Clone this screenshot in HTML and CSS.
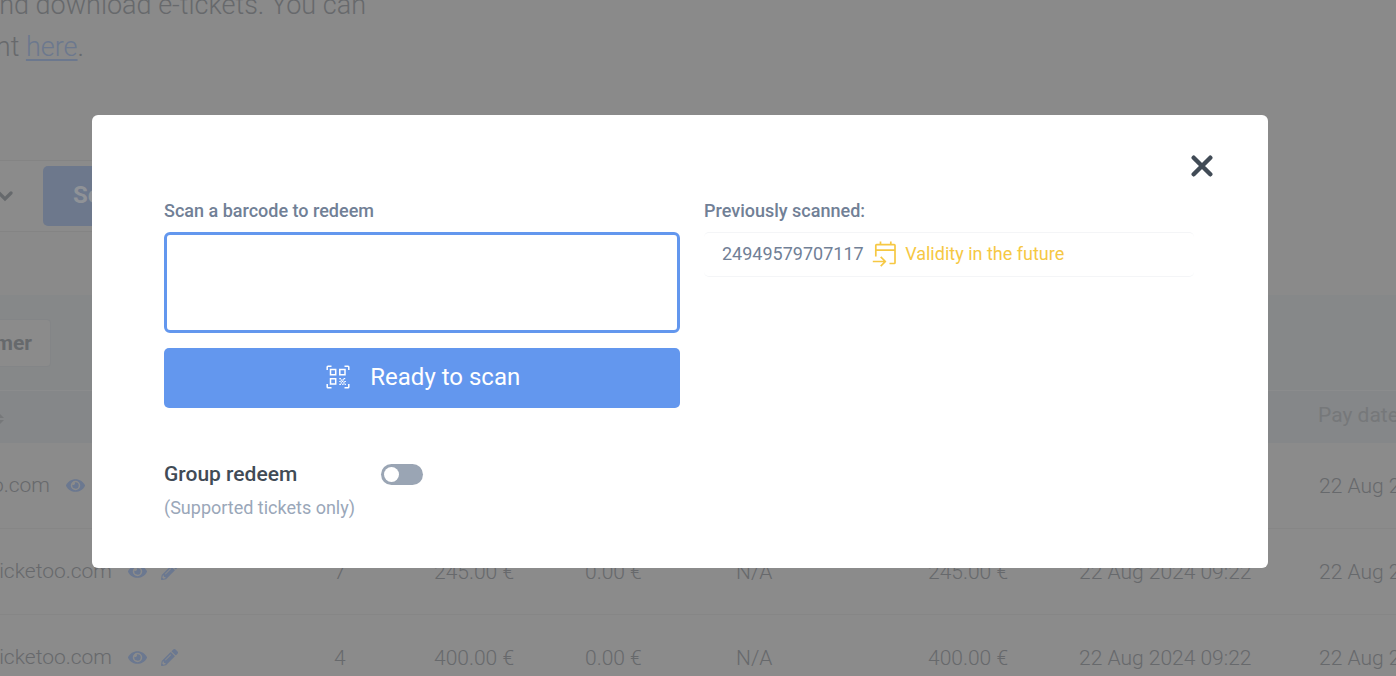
FILE: index.html
```
<!DOCTYPE html>
<html lang="en">
<head>
<meta charset="utf-8">
<title>Redeem tickets</title>
<link rel="stylesheet" href="styles.css">
</head>
<body>
<svg class="sprite" width="0" height="0" aria-hidden="true">
  <symbol id="eye" viewBox="0 0 576 512"><path fill="currentColor" d="M572.5 241.4C518.3 135.6 410.9 64 288 64S57.7 135.6 3.500 241.400a32.400 32.400 0 0 0 0 29.200C57.700 376.400 165.100 448 288 448s230.300-71.600 284.500-177.400a32.400 32.400 0 0 0 0-29.200zM288 400a144 144 0 1 1 144-144 143.900 143.900 0 0 1-144 144zm0-240a95.300 95.300 0 0 0-25.300 3.800 47.900 47.900 0 0 1-66.900 66.900A95.800 95.800 0 1 0 288 160z"/></symbol>
  <symbol id="pencil" viewBox="0 0 512 512"><path fill="currentColor" d="M498 142l-46 46c-5 5-13 5-17 0L324 77c-5-5-5-12 0-17l46-46c19-19 49-19 68 0l60 60c19 19 19 49 0 68zm-214-42L22 362 0 484c-3 16 12 30 28 28l122-22 262-262c5-5 5-13 0-17L301 100c-4-5-12-5-17 0zM124 340c-5-6-5-14 0-20l154-154c6-5 14-5 20 0s5 14 0 20L144 340c-6 5-14 5-20 0zm-36 84h48v36l-64 12-32-31 12-65h36v48z"/></symbol>
</svg>
<main class="page">
  <section class="intro">
    <p class="intro-line first">nd download e-tickets. You can</p>
    <p class="intro-line second">nt <a class="link">here</a>.</p>
  </section>
  <section class="filters">
    <svg class="chevron" width="18" height="14" viewBox="0 0 18 14"><path d="M3 4l6 6 6-6" fill="none" stroke="currentColor" stroke-width="3.200" stroke-linecap="round"/></svg>
    <span class="search">Search</span>
  </section>
  <section class="tabs"><span class="tab">mer</span></section>
  <section class="table">
    <div class="row head"><div class="sort"><svg width="16" height="16" viewBox="0 0 16 16"><path d="M1 7l7-7 7 7zM1 9h14l-7 7z" fill="currentColor"/></svg></div><span class="paid">Pay date</span></div>
    <div class="row">
      <div class="email short"><span class="mail">o.com</span><svg class="eye"><use href="#eye"/></svg></div>
      <span></span><span></span><span></span><span></span><span></span><span></span><span>22 Aug 2024</span>
    </div>
    <div class="row">
      <div class="email"><span class="mail">icketoo.com</span><svg class="eye"><use href="#eye"/></svg><svg class="pencil"><use href="#pencil"/></svg></div>
      <span>7</span><span>245.00 €</span><span>0.00 €</span><span>N/A</span><span>245.00 €</span><span>22 Aug 2024 09:22</span><span>22 Aug 2024</span>
    </div>
    <div class="row">
      <div class="email"><span class="mail">icketoo.com</span><svg class="eye"><use href="#eye"/></svg><svg class="pencil"><use href="#pencil"/></svg></div>
      <span>4</span><span>400.00 €</span><span>0.00 €</span><span>N/A</span><span>400.00 €</span><span>22 Aug 2024 09:22</span><span>22 Aug 2024</span>
    </div>
  </section>
</main>
<div class="modal">
  <div class="modal-top">
    <svg class="close" width="22" height="22" viewBox="0 0 22 22"><path d="M2.700 2.700L19.300 19.300M19.300 2.700L2.700 19.300" stroke="currentColor" stroke-width="4.400" stroke-linecap="round"/></svg>
  </div>
  <div class="modal-body">
    <div class="scan">
      <label class="label">Scan a barcode to redeem</label>
      <div class="field"></div>
      <div class="ready">
        <svg width="24" height="24" viewBox="0 0 24 24" fill="none" stroke="currentColor" stroke-width="1.500"><path d="M1.200 5V2Q1.200 1.200 2 1.200H5.500M18.500 1.200H22Q22.800 1.200 22.800 2V5M22.800 19V22Q22.800 22.800 22 22.800H18.500M5.500 22.800H2Q1.200 22.800 1.200 22V19M4.500 4.500h5.200v5.200H4.500zM13.800 4.500h5.200v5.200H13.800zM4.500 13.800h5.200v5.200H4.500z"/><path stroke-width="1.200" d="M13.300 13.700h1.600M17.600 13.700h1.600M14.700 15.100h1.600M16.600 14.800h1.300M13.300 16.500h1.400M15.700 16.500h1.600M18.300 16.500h1.600M14.700 17.900h1.400M17.200 17.900h1.500M13.300 19.300h1.600M16.200 19.300h1.300M18.600 19.300h1.300"/></svg>
        <span class="ready-text">Ready to scan</span>
      </div>
      <div class="group"><span class="group-name">Group redeem</span><span class="toggle"><span class="knob"></span></span></div>
      <p class="note">(Supported tickets only)</p>
    </div>
    <div class="history">
      <p class="label">Previously scanned:</p>
      <div class="entry">
        <span class="code">24949579707117</span>
        <svg class="calendar" width="26" height="26" viewBox="0 0 26 26" fill="none" stroke="currentColor" stroke-width="1.700"><path stroke-linejoin="round" d="M3.800 15.500V4.500Q3.800 3.700 4.600 3.700H22.200Q23 3.700 23 4.500V21.700Q23 22.500 22.200 22.500H17.500M3.800 9.200H23M8.500.5V4M18.800.5V4M.8 20.500H13M8.700 15.800L13.400 20.500L8.700 25.200"/></svg>
        <span class="status">Validity in the future</span>
      </div>
    </div>
  </div>
</div>
</body>
</html>
```
FILE: styles.css
```
* { box-sizing: border-box; }
body { margin: 0; overflow: hidden; background: #8a8a8a; font-family: Roboto, "Liberation Sans", sans-serif; }
p { margin: 0; }
.sprite { position: absolute; }
.page { width: 1396px; height: 676px; overflow: hidden; color: #67696c; font-weight: 300; }
.intro { height: 160px; overflow: hidden; }
.intro-line { display: flex; justify-content: flex-end; white-space: pre; font-size: 27px; line-height: 42px; height: 42px; }
.first { width: 366px; margin-top: -16px; }
.second { width: 84px; }
.link { color: #6c788e; text-decoration: underline; text-decoration-thickness: 2px; text-underline-offset: 3px; }
.filters { width: 1200px; height: 72px; display: flex; align-items: center; border-top: 1px solid #848484; border-bottom: 1px solid #848484; background: #8b8b8b; }
.chevron { margin-left: -4px; color: #66696c; }
.search { margin-left: 29px; width: 140px; height: 60px; border-radius: 5px; background: #6d788c; color: #8f9297; font-size: 24px; font-weight: 700; line-height: 58px; padding-left: 30px; }
.tabs { margin-top: 63px; height: 95px; padding-top: 24px; background: #868889; }
.tab { display: flex; justify-content: flex-end; align-items: center; width: 111px; height: 48px; margin-left: -60px; padding-right: 18px; border: 1px solid #838587; border-radius: 4px; background: #8b8b8b; font-size: 21px; font-weight: 700; color: #66696c; }
.row { display: grid; grid-template-columns: 334px 100px 151px 151px 192px 151px 240px 1fr; align-items: center; height: 86px; border-bottom: 1px solid #868686; background: #8b8b8b; font-size: 21px; white-space: nowrap; }
.row > span { padding-top: 1px; }
.head { height: 53px; border-top: 1px solid #8b8c8d; border-bottom: 0; background: #858789; color: #76787a; font-weight: 400; }
.sort { margin-left: -11px; padding-top: 4px; display: flex; }
.row > .paid { grid-column: 8; margin-left: -1px; padding: 0 0 5px; }
.email { display: flex; align-items: center; }
.mail { display: flex; justify-content: flex-end; width: 112px; margin-right: 16px; padding-bottom: 1px; }
.short .mail { width: 50px; }
.eye { width: 19px; height: 17px; color: #6b7890; }
.pencil { width: 17px; height: 17px; margin-left: 14px; color: #6b7890; }
.modal { position: absolute; left: 92px; top: 115px; width: 1176px; height: 453px; padding: 39.5px 54px 0 72px; border-radius: 6px; background: #fff; }
.modal-top { display: flex; justify-content: flex-end; height: 42.5px; }
.close { margin-right: 1px; color: #414b56; }
.modal-body { display: flex; gap: 24px; }
.scan { width: 516px; }
.history { width: 490px; }
.label { display: block; height: 35px; line-height: 28px; font-size: 18px; font-weight: 500; color: #718096; }
.field { height: 101px; border: 3px solid #6397ee; border-radius: 6px; }
.ready { display: flex; align-items: center; justify-content: center; gap: 20.5px; height: 60px; margin-top: 15px; padding: 0 0 2px 2px; border-radius: 5px; background: #6397ee; color: #fff; font-size: 24px; }
.group { display: flex; align-items: center; height: 32px; margin-top: 50px; }
.group-name { width: 217px; font-size: 21px; font-weight: 500; color: #414b56; }
.toggle { width: 42px; height: 21px; padding: 3px; border-radius: 11px; background: #9aa5b4; }
.knob { display: block; width: 15px; height: 15px; border-radius: 50%; background: #fff; }
.note { margin-top: 5px; line-height: 26px; font-size: 18px; color: #9aa7b9; }
.entry { display: flex; align-items: center; height: 45px; padding: 0 0 2px 18px; border-top: 1px solid #f4f5f7; border-bottom: 1px solid #f4f5f7; border-radius: 5px; font-size: 18px; color: #718096; }
.calendar { margin: 0 7.5px 0 8px; color: #f6c843; }
.status { color: #f6c843; }
```
